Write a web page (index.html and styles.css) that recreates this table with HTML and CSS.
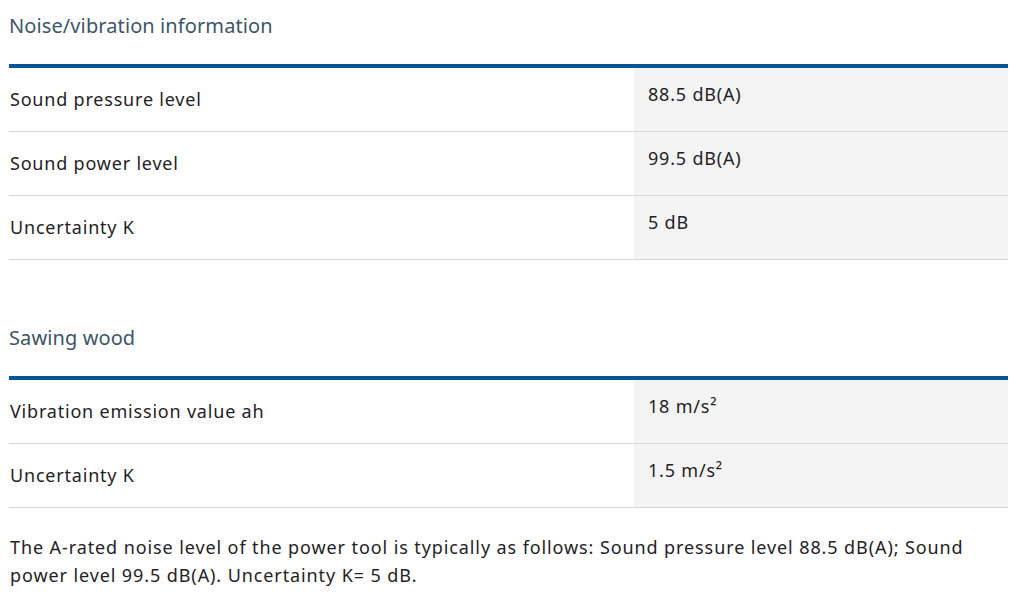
FILE: index.html
```html
<!DOCTYPE html>
<html lang="en">
<head>
<meta charset="utf-8">
<link rel="stylesheet" href="styles.css">
</head>
<body>
<main class="page">
  <section class="spec">
    <h2 class="spec-title">Noise/vibration information</h2>
    <div class="spec-table">
      <div class="row"><div class="label">Sound pressure level</div><div class="value">88.5 dB(A)</div></div>
      <div class="row"><div class="label">Sound power level</div><div class="value">99.5 dB(A)</div></div>
      <div class="row"><div class="label">Uncertainty K</div><div class="value">5 dB</div></div>
    </div>
  </section>
  <section class="spec spec-second">
    <h2 class="spec-title">Sawing wood</h2>
    <div class="spec-table">
      <div class="row"><div class="label">Vibration emission value ah</div><div class="value">18 m/s²</div></div>
      <div class="row"><div class="label">Uncertainty K</div><div class="value">1.5 m/s²</div></div>
    </div>
  </section>
  <p class="note">The A-rated noise level of the power tool is typically as follows: Sound pressure level 88.5 dB(A); Sound power level 99.5 dB(A). Uncertainty K= 5 dB.</p>
</main>
</body>
</html>
```
FILE: styles.css
```css
html, body {
  margin: 0;
  padding: 0;
  background: #fff;
}
body {
  font-family: "Noto Sans", "Open Sans", sans-serif;
  color: #1f2226;
}
.page {
  padding: 0 3px 0 9px;
}
.spec-title {
  margin: 0;
  font-weight: 400;
  font-size: 20px;
  line-height: 24px;
  padding-top: 14px;
  height: 26px;
  color: #3e5566;
  letter-spacing: 0.1px;
}
.spec-second {
  margin-top: 52px;
}
.spec-title + .spec-table {
  margin-top: 24px;
}
.spec-table {
  border-top: 4px solid #005691;
}
.row {
  display: grid;
  grid-template-columns: 625px 1fr;
  height: 63px;
  border-bottom: 1px solid #d9d9d9;
  font-size: 18px;
  letter-spacing: 0.8px;
}
.label {
  display: flex;
  align-items: center;
  padding-left: 1px;
  padding-bottom: 2px;
}
.value {
  background: #f4f4f4;
  padding: 14px 0 0 14px;
  line-height: 24px;
}
.note {
  margin: 25px 0 0 1px;
  font-size: 18px;
  letter-spacing: 0.9px;
  line-height: 28px;
}
```
